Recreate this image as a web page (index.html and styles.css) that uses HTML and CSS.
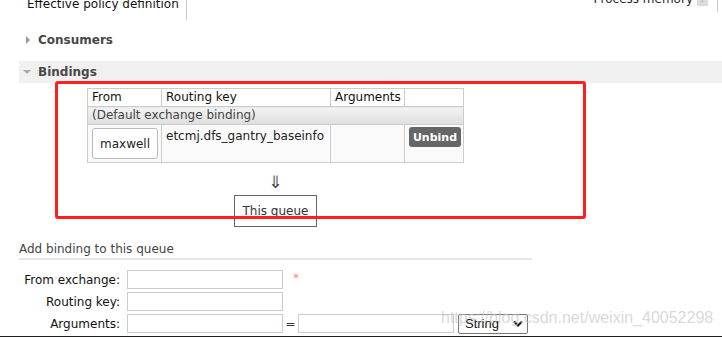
FILE: index.html
```html
<!DOCTYPE html>
<html lang="en">
<head>
    <meta charset="UTF-8">
    <meta name="viewport" content="width=device-width, initial-scale=1.0">
    <title>Queue - RabbitMQ Management</title>
    <link rel="stylesheet" href="styles.css">
</head>
<body>
    <div class="topbar">
        <div class="tab"><span>Effective policy definition</span></div>
        <div class="memory">Process memory <span class="help">?</span></div>
        <div class="edge"></div>
    </div>

    <div class="section">
        <h2 class="section-title"><span class="tri-right"></span>Consumers</h2>
    </div>

    <div class="section">
        <h2 class="section-title bar"><span class="tri-down"></span>Bindings</h2>
        <div class="bindings">
            <table class="list">
                <colgroup>
                    <col style="width: 74px">
                    <col style="width: 169px">
                    <col style="width: 74px">
                    <col style="width: 59px">
                </colgroup>
                <tr>
                    <th>From</th>
                    <th>Routing key</th>
                    <th>Arguments</th>
                    <th></th>
                </tr>
                <tr class="default-row">
                    <td colspan="4">(Default exchange binding)</td>
                </tr>
                <tr class="data-row">
                    <td><button class="exchange-btn">maxwell</button></td>
                    <td>etcmj.dfs_gantry_baseinfo</td>
                    <td></td>
                    <td><button class="unbind-btn">Unbind</button></td>
                </tr>
            </table>
            <div class="arrow">&#8659;</div>
            <div class="queue-box">This queue</div>
        </div>
        <!-- annotation box drawn over the bindings -->
        <div class="highlight"></div>
    </div>

    <div class="add-binding">
        <h3>Add binding to this queue</h3>
        <div class="form-row">
            <label>From exchange:</label>
            <input type="text" class="field">
            <span class="required">*</span>
        </div>
        <div class="form-row">
            <label>Routing key:</label>
            <input type="text" class="field">
        </div>
        <div class="form-row">
            <label>Arguments:</label>
            <input type="text" class="field">
            <span class="equals">=</span>
            <input type="text" class="field">
            <div class="select">String
                <svg width="10" height="7" viewBox="0 0 10 7"><path d="M1 1.5 L5 5.5 L9 1.5" fill="none" stroke="#111" stroke-width="2"/></svg>
            </div>
        </div>
    </div>

    <div class="watermark">https://blog.csdn.net/weixin_40052298</div>
    <div class="footer-strip"></div>
</body>
</html>
```

FILE: styles.css
```css
body {
    margin: 0;
    font-family: "DejaVu Sans", Verdana, sans-serif;
    font-size: 12px;
    color: #222;
    background-color: #fff;
    position: relative;
    height: 337px;
    overflow: hidden;
}
.topbar {
    display: flex;
    height: 20px;
}
.tab {
    padding: 0 7px 0 27px;
    border-right: 1px solid #ccc;
}
.tab span {
    display: block;
    margin-top: -3px;
    line-height: 14px;
    color: #111;
}
.memory {
    margin-left: auto;
    margin-top: -8px;
    line-height: 14px;
    height: 14px;
    color: #222;
    display: flex;
    align-items: flex-start;
    gap: 4px;
}
.help {
    display: block;
    width: 11px;
    height: 14px;
    background-color: #ddd;
    color: #888;
    font-size: 10px;
    text-align: center;
}
.edge {
    width: 1px;
    height: 12px;
    margin: 0 4px 0 9px;
    background-color: #ccc;
}
.section {
    margin-left: 19px;
}
.section-title {
    display: flex;
    align-items: center;
    margin: 11px 0 0 0;
    font-size: 12px;
    font-weight: bold;
    line-height: 18px;
    color: #484848;
}
.tri-right {
    width: 0;
    height: 0;
    margin: 0 8px 0 7px;
    border-top: 4px solid transparent;
    border-bottom: 4px solid transparent;
    border-left: 4px solid #999;
}
.section-title.bar {
    margin-top: 12px;
    height: 22px;
    background-color: #f0f0f0;
}
.tri-down {
    width: 0;
    height: 0;
    margin: 0 7px 1px 4px;
    border-left: 4px solid transparent;
    border-right: 4px solid transparent;
    border-top: 4px solid #aaa;
}
.bindings {
    display: flex;
    flex-direction: column;
    align-items: center;
    width: max-content;
    margin: 5px 0 0 68px;
}
.list {
    border-collapse: collapse;
    table-layout: fixed;
    width: 377px;
}
.list th,
.list td {
    border: 1px solid #ccc;
    padding: 0 4px;
    text-align: left;
    font-weight: normal;
    vertical-align: top;
    line-height: 16px;
}
.list th {
    height: 17px;
    color: #111;
}
.default-row td {
    height: 17px;
    color: #444;
    background: linear-gradient(#f3f3f3, #dedede);
}
.data-row td {
    height: 32px;
    padding-top: 2px;
    padding-bottom: 2px;
    background-color: #fafafa;
}
.data-row td:nth-child(2) {
    padding-top: 3px;
}
.exchange-btn {
    width: 66px;
    height: 31px;
    margin-top: 1px;
    border: 1px solid #bbb;
    border-radius: 3px;
    background-color: #fff;
    font-family: "DejaVu Sans", Verdana, sans-serif;
    font-size: 12px;
    color: #222;
    cursor: pointer;
}
.unbind-btn {
    width: 52px;
    height: 20px;
    padding: 0;
    border: none;
    border-radius: 3px;
    background-color: #666;
    color: #fff;
    font-family: "DejaVu Sans", Verdana, sans-serif;
    font-size: 11px;
    font-weight: bold;
    cursor: pointer;
}
.arrow {
    margin-top: 10px;
    font-family: "DejaVu Sans", sans-serif;
    font-size: 17px;
    line-height: 19px;
    color: #444;
}
.queue-box {
    margin-top: 3px;
    padding: 8px 8px;
    line-height: 14px;
    border: 1px solid #666;
    color: #333;
}
.highlight {
    position: absolute;
    top: 81px;
    left: 55px;
    width: 531px;
    height: 138px;
    box-sizing: border-box;
    border: 3px solid #ff1f1f;
    border-radius: 3px;
}
.add-binding {
    margin-left: 19px;
}
.add-binding h3 {
    width: 513px;
    margin: 13px 0 10px 0;
    font-size: 12px;
    font-weight: normal;
    line-height: 18px;
    color: #444;
    border-bottom: 2px solid #e6e6e6;
}
.form-row {
    display: flex;
    align-items: center;
    height: 19px;
    margin-bottom: 3px;
}
.form-row label {
    width: 101px;
    margin-right: 7px;
    text-align: right;
    color: #111;
}
.field {
    width: 156px;
    height: 19px;
    box-sizing: border-box;
    margin: 0;
    border: 1px solid #ccc;
    padding: 1px 3px;
}
.required {
    margin: -4px 0 0 10px;
    color: #f88;
}
.equals {
    width: 15px;
    text-align: center;
    color: #333;
}
.select {
    display: flex;
    align-items: center;
    justify-content: space-between;
    width: 70px;
    height: 20px;
    box-sizing: border-box;
    margin-left: 4px;
    padding: 0 4px 0 6px;
    border: 1px solid #777;
    border-radius: 2px;
    font-family: "Liberation Sans", Arial, sans-serif;
    font-size: 13px;
    color: #111;
}
.watermark {
    position: absolute;
    left: 441px;
    top: 309px;
    font-family: "Liberation Sans", Arial, sans-serif;
    font-size: 16px;
    color: rgba(195, 195, 195, 0.65);
}
.footer-strip {
    height: 5px;
    margin-top: 1px;
    background-color: #1e1e1e;
}
```
